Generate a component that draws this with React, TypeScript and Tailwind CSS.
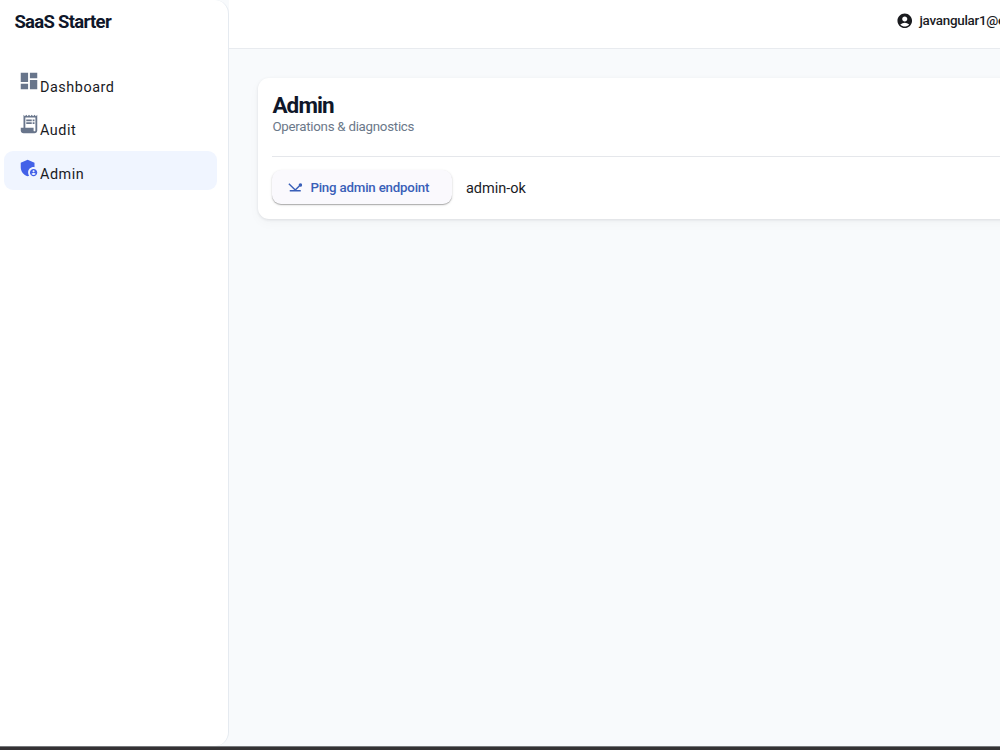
import clsx from "clsx";
import type { ComponentType } from "react";
import {
  MdAccountCircle,
  MdAdminPanelSettings,
  MdDashboard,
  MdNetworkPing,
} from "react-icons/md";

// receipt with a solid base
function ReceiptIcon({ className }: { className?: string }) {
  return (
    <svg viewBox="0 0 24 24" fill="currentColor" className={className}>
      <path d="M19.5 3.5 18 2l-1.5 1.5L15 2l-1.5 1.5L12 2l-1.5 1.5L9 2 7.5 3.5 6 2v14H3v3c0 1.66 1.34 3 3 3h12c1.66 0 3-1.34 3-3V2l-1.5 1.5zM19 19c0 .55-.45 1-1 1s-1-.45-1-1v-3H8V5h11v14z" />
      <path d="M9 7h6v2H9zM16 7h2v2h-2zM9 10h6v2H9zM16 10h2v2h-2z" />
    </svg>
  );
}

const links: { label: string; icon: ComponentType<{ className?: string }>; active?: boolean }[] = [
  { label: "Dashboard", icon: MdDashboard },
  { label: "Audit", icon: ReceiptIcon },
  { label: "Admin", icon: MdAdminPanelSettings, active: true },
];

function Sidebar() {
  return (
    <aside className="w-[229px] shrink-0 rounded-r-[14px] border-r border-[#e5eaf0] bg-white">
      <div className="flex h-[43px] items-center pl-[14.4px] pt-[2px] text-[18.5px] font-bold tracking-[-0.7px] text-[#0f172a]">
        SaaS Starter
      </div>
      <nav className="mt-[20.5px] flex flex-col gap-1 pl-1 pr-[11px]">
        {links.map(({ label, icon: Icon, active }) => (
          <a
            key={label}
            className={clsx(
              "flex h-[39.5px] items-start rounded-[9px] pl-[14px]",
              active && "bg-[#f0f5ff]"
            )}
          >
            <Icon
              className={clsx(
                "mt-[6px] size-[22px] shrink-0",
                active ? "text-[#4361e8]" : "text-[#68758b]"
              )}
            />
            <span className="mt-[13px] text-[14.4px] leading-[22px] tracking-[0.54px] text-[#1a1b1f]">
              {label}
            </span>
          </a>
        ))}
      </nav>
    </aside>
  );
}

export default function App() {
  return (
    <div className="flex h-[750px] w-[1000px] flex-col overflow-hidden bg-[#f8fafc] font-['Roboto',sans-serif]">
      <div className="flex min-h-0 flex-1">
        <Sidebar />
        <div className="min-w-0 flex-1">
          <header className="flex h-[49px] items-center border-b border-[#e8ebef] bg-white pb-[6px] pl-[667px]">
            <MdAccountCircle className="mr-[6px] size-[17.5px] shrink-0 text-[#1a1b1f]" />
            <span className="whitespace-nowrap pt-px text-[13.4px] font-medium tracking-[-0.26px] text-[#1a1b1f]">
              javangular1@example.com
            </span>
          </header>

          <main className="pl-[29px] pt-[29px]">
            <section className="h-[140.6px] w-[900px] rounded-[11px] bg-white pl-[14.4px] pt-[14px] shadow-[0_1px_3px_rgba(15,23,42,0.10),0_4px_12px_rgba(15,23,42,0.03)]">
              <h1 className="text-[22.5px] font-bold leading-[27px] tracking-[-0.9px] text-[#0f172a]">
                Admin
              </h1>
              <p className="pt-px text-[13.3px] leading-[14px] tracking-[-0.26px] text-[#6b7889]">
                Operations &amp; diagnostics
              </p>
              <hr className="mt-[22px] border-[#e5e7eb]" />
              <div className="mt-[13.2px] flex items-center gap-[14px]">
                <button className="flex h-[34px] w-[179.6px] items-center rounded-[9px] bg-[#faf9fd] pl-[15px] text-[13.3px] font-medium tracking-[-0.2px] text-[#395fb8] shadow-[0_1px_1px_rgba(0,0,0,0.26),0_1px_3px_rgba(0,0,0,0.12)]">
                  <MdNetworkPing className="mr-[6.5px] size-[16.5px] shrink-0" />
                  <span className="pt-[2px]">Ping admin endpoint</span>
                </button>
                <span className="pt-[3px] text-[14.5px] text-[#1a1b1f]">admin-ok</span>
              </div>
            </section>
          </main>
        </div>
      </div>
      <div className="h-1 shrink-0 border-t border-[#77797c] bg-[#343234]" />
    </div>
  );
}
